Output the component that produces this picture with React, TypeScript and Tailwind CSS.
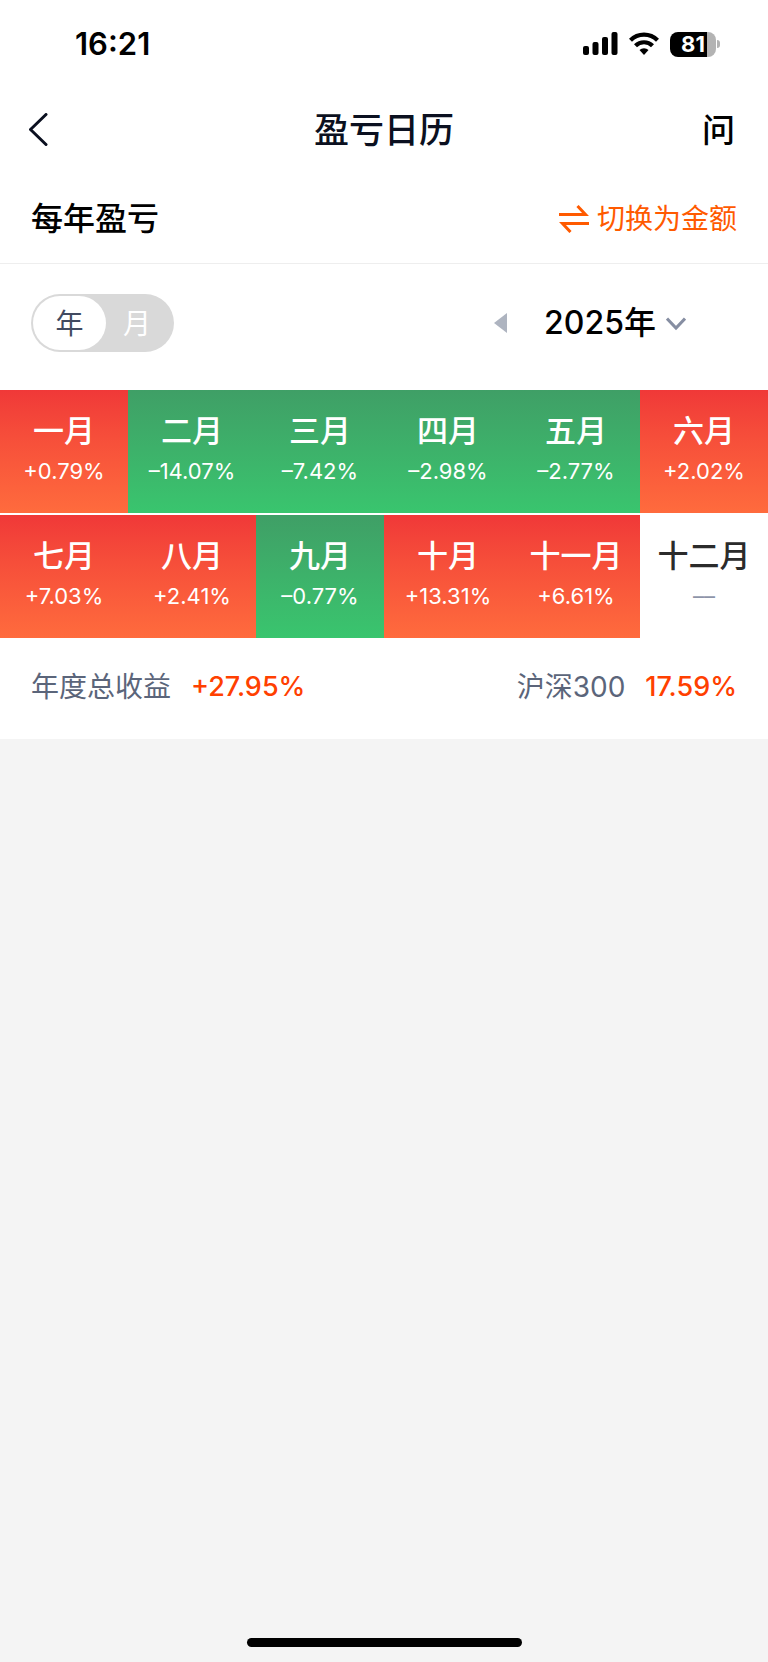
import { useState } from "react";

type Month = { name: string; rate: number | null };

const months: Month[] = [
  { name: "一月", rate: 0.79 },
  { name: "二月", rate: -14.07 },
  { name: "三月", rate: -7.42 },
  { name: "四月", rate: -2.98 },
  { name: "五月", rate: -2.77 },
  { name: "六月", rate: 2.02 },
  { name: "七月", rate: 7.03 },
  { name: "八月", rate: 2.41 },
  { name: "九月", rate: -0.77 },
  { name: "十月", rate: 13.31 },
  { name: "十一月", rate: 6.61 },
  { name: "十二月", rate: null },
];

const formatRate = (rate: number | null) => {
  if (rate === null) return "––";
  return `${rate < 0 ? "–" : "+"}${Math.abs(rate).toFixed(2)}%`;
};

const cellBg = (rate: number | null) => {
  if (rate === null) return "bg-white text-[#2b2b2b]";
  return rate < 0
    ? "bg-linear-to-b from-[#3f9f66] to-[#39c56e] text-white"
    : "bg-linear-to-b from-[#f03838] to-[#ff6b3d] text-white";
};

function StatusBar() {
  return (
    <div className="flex h-[88px] items-center justify-between pr-12 pl-[75px] text-black">
      <span className="text-[31px] font-semibold">16:21</span>
      <div className="flex items-center gap-[11px]">
        <svg width="35" height="24" viewBox="0 0 35 24" fill="currentColor">
          <rect x="0" y="14" width="6" height="9" rx="2" />
          <rect x="9.5" y="10" width="6" height="13" rx="2" />
          <rect x="19" y="5" width="6" height="18" rx="2" />
          <rect x="28.5" y="0" width="6" height="23" rx="2" />
        </svg>
        <svg width="30" height="24" viewBox="0 0 30 24" fill="none" stroke="currentColor" strokeWidth="4.2">
          <path d="M1.500 8.200a19 19 0 0 1 27 0" />
          <path d="M6.500 13.800a12 12 0 0 1 17 0" />
          <path d="M15 23l-4.500-5a6.500 6.500 0 0 1 9 0z" fill="currentColor" stroke="none" />
        </svg>
        <div className="flex items-center gap-px">
          <div className="flex h-[25px] w-[46px] items-center justify-center rounded-[8px] bg-linear-to-r from-black from-81% to-[#b3b3b3] to-81% text-[22px] leading-none font-bold text-white">
            81
          </div>
          <div className="h-2 w-[3px] rounded-r-full bg-[#b3b3b3]" />
        </div>
      </div>
    </div>
  );
}

export default function App() {
  const [mode, setMode] = useState("year");
  const [year, setYear] = useState("2025");

  return (
    <div className="flex min-h-screen flex-col bg-[#f4f4f4] font-['Inter','Noto_Sans_CJK_SC',sans-serif]">
      <div className="bg-white">
        <StatusBar />

        <header className="grid h-[84px] grid-cols-[1fr_auto_1fr] items-center px-[29px] text-[#0b1020]">
          <button aria-label="返回" className="justify-self-start">
            <svg width="19" height="34" viewBox="0 0 19 34" fill="none" stroke="currentColor" strokeWidth="3" strokeLinecap="round" strokeLinejoin="round">
              <path d="M17 1.500L1.500 16.500l15.500 15" />
            </svg>
          </button>
          <h1 className="text-[35px] leading-[48px] font-medium">盈亏日历</h1>
          <button className="justify-self-end pr-1 text-[33px] leading-[48px] font-medium text-black">问</button>
        </header>

        <div className="flex h-[92px] items-center justify-between border-b border-[#eeeeee] px-[31px] pt-[2px]">
          <h2 className="text-[32px] leading-[48px] font-medium text-black">每年盈亏</h2>
          <button className="flex items-center gap-2 text-[28px] leading-[40px] text-[#ff5a00]">
            <svg width="30" height="28" viewBox="0 0 30 28" fill="none" stroke="currentColor" strokeWidth="3">
              <path d="M0 9.500h26.500l-8-8.500" />
              <path d="M30 18.500H3.500l8 8.500" />
            </svg>
            切换为金额
          </button>
        </div>

        <div className="flex items-center justify-between pt-[30px] pr-[82px] pb-[38px] pl-[31px]">
          <div role="radiogroup" aria-label="统计周期" className="flex h-[58px] w-[143px] rounded-full bg-[#d9d9d9] p-[2px] text-[28px]">
            <label className="flex w-[73px] cursor-pointer items-center justify-center rounded-full pt-[2px] text-white has-checked:bg-white has-checked:text-[#414a60]">
              <input type="radio" name="mode" className="sr-only" checked={mode === "year"} onChange={() => setMode("year")} />
              年
            </label>
            <label className="flex flex-1 cursor-pointer items-center justify-center rounded-full pt-[2px] pr-1 text-white has-checked:bg-white has-checked:text-[#414a60]">
              <input type="radio" name="mode" className="sr-only" checked={mode === "month"} onChange={() => setMode("month")} />
              月
            </label>
          </div>

          <div className="flex items-center gap-[37px]">
            <button aria-label="上一年" onClick={() => setYear(y => String(Math.max(2023, Number(y) - 1)))}>
              <svg width="13" height="20" viewBox="0 0 13 20" fill="#aeb4c0">
                <path d="M13 0v20L0 10z" />
              </svg>
            </button>
            <div className="relative">
              <select
                aria-label="年份"
                value={year}
                onChange={e => setYear(e.target.value)}
                className="block h-[48px] appearance-none bg-transparent pr-[30px] text-[32px] font-medium text-black outline-none [field-sizing:content]"
              >
                <option value="2025">2025年</option>
                <option value="2024">2024年</option>
                <option value="2023">2023年</option>
              </select>
              <svg className="pointer-events-none absolute top-[18px] right-0" width="20" height="14" viewBox="0 0 20 14" fill="none" stroke="#868ea2" strokeWidth="3">
                <path d="M1 1.500l9 9.500 9-9.500" />
              </svg>
            </div>
          </div>
        </div>

        <div className="grid grid-cols-6 gap-y-[2px]">
          {months.map(m => (
            <div key={m.name} className={`flex h-[123px] flex-col items-center gap-1 pt-[21px] ${cellBg(m.rate)}`}>
              <p className="text-[31px] leading-[40px] font-medium">{m.name}</p>
              <p className={`text-[22px] leading-[32px] ${m.rate === null ? "text-[#8d94a8]" : ""}`}>{formatRate(m.rate)}</p>
            </div>
          ))}
        </div>

        <div className="flex items-center justify-between px-[31px] pt-[29px] pb-[32px] leading-[40px]">
          <p className="flex items-center gap-5">
            <span className="text-[28px] text-[#5b657a]">年度总收益</span>
            <span className="text-[27px] font-medium text-[#ff4000]">+27.95%</span>
          </p>
          <p className="flex items-center gap-5">
            <span className="text-[28px] text-[#5b657a]">沪深300</span>
            <span className="text-[27px] font-medium text-[#ff4000]">17.59%</span>
          </p>
        </div>
      </div>

      <div className="mx-auto mt-auto mb-[15px] h-[9px] w-[275px] rounded-full bg-black" />
    </div>
  );
}
